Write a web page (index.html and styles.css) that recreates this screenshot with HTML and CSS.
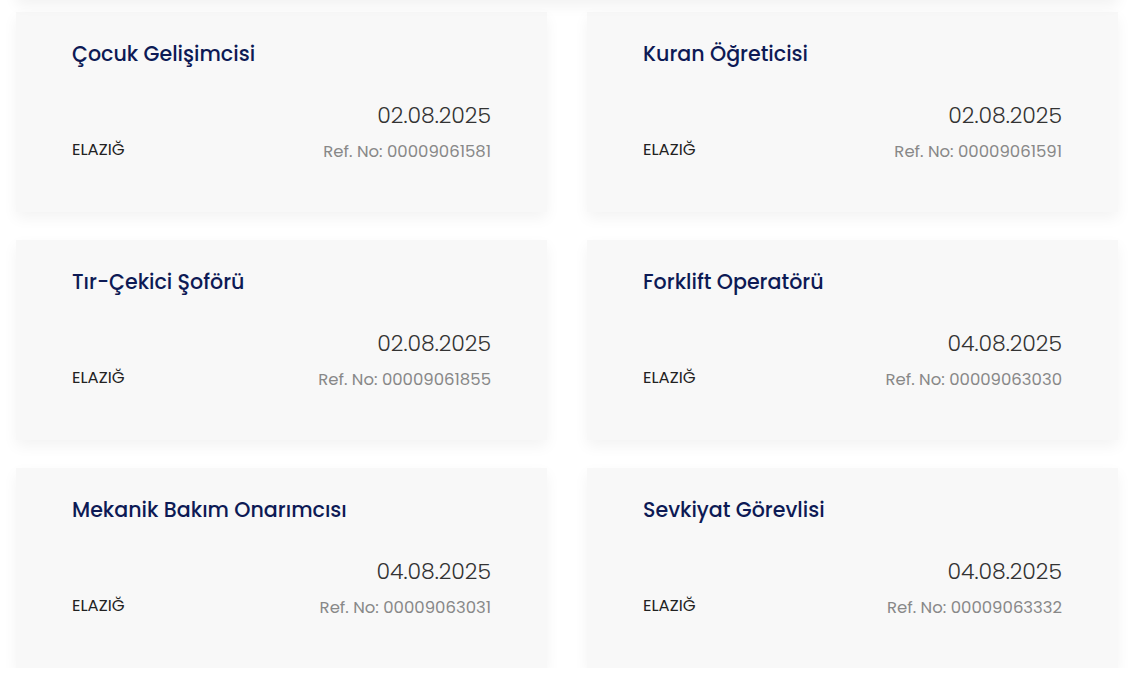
FILE: index.html
```html
<!DOCTYPE html>
<html lang="tr">
<head>
  <meta charset="UTF-8">
  <meta name="viewport" content="width=device-width, initial-scale=1.0">
  <link rel="stylesheet" href="styles.css">
</head>
<body>

  <div class="job-grid">

    <div class="job-card">
      <h3 class="job-title">Çocuk Gelişimcisi</h3>
      <div class="job-meta">
        <span class="job-city">ELAZIĞ</span>
        <div class="job-info">
          <span class="job-date">02.08.2025</span>
          <span class="job-ref">Ref. No: 00009061581</span>
        </div>
      </div>
    </div>

    <div class="job-card">
      <h3 class="job-title">Kuran Öğreticisi</h3>
      <div class="job-meta">
        <span class="job-city">ELAZIĞ</span>
        <div class="job-info">
          <span class="job-date">02.08.2025</span>
          <span class="job-ref">Ref. No: 00009061591</span>
        </div>
      </div>
    </div>

    <div class="job-card">
      <h3 class="job-title">Tır-Çekici Şoförü</h3>
      <div class="job-meta">
        <span class="job-city">ELAZIĞ</span>
        <div class="job-info">
          <span class="job-date">02.08.2025</span>
          <span class="job-ref">Ref. No: 00009061855</span>
        </div>
      </div>
    </div>

    <div class="job-card">
      <h3 class="job-title">Forklift Operatörü</h3>
      <div class="job-meta">
        <span class="job-city">ELAZIĞ</span>
        <div class="job-info">
          <span class="job-date">04.08.2025</span>
          <span class="job-ref">Ref. No: 00009063030</span>
        </div>
      </div>
    </div>

    <div class="job-card">
      <h3 class="job-title">Mekanik Bakım Onarımcısı</h3>
      <div class="job-meta">
        <span class="job-city">ELAZIĞ</span>
        <div class="job-info">
          <span class="job-date">04.08.2025</span>
          <span class="job-ref">Ref. No: 00009063031</span>
        </div>
      </div>
    </div>

    <div class="job-card">
      <h3 class="job-title">Sevkiyat Görevlisi</h3>
      <div class="job-meta">
        <span class="job-city">ELAZIĞ</span>
        <div class="job-info">
          <span class="job-date">04.08.2025</span>
          <span class="job-ref">Ref. No: 00009063332</span>
        </div>
      </div>
    </div>

  </div>

</body>
</html>
```

FILE: styles.css
```css
body {
  margin: 0;
  font-family: 'Poppins', 'Open Sans', sans-serif;
  background-color: #fff;
  overflow: hidden;
}

.job-grid {
  display: grid;
  grid-template-columns: 531px 531px;
  column-gap: 40px;
  row-gap: 28px;
  padding: 12px 0 0 16px;
  position: relative;
}

/* faint shadow of the row above, cut off at the top */
.job-grid::before {
  content: '';
  position: absolute;
  top: -20px;
  left: 16px;
  width: 1102px;
  height: 20px;
  box-shadow: 0 6px 14px rgba(0, 0, 0, 0.05);
}

.job-card {
  height: 200px;
  box-sizing: border-box;
  padding: 30px 56px 0 56px;
  background-color: #f8f8f8;
  box-shadow: 0 6px 14px rgba(0, 0, 0, 0.05);
  display: flex;
  flex-direction: column;
}

.job-title {
  margin: 0;
  font-size: 20.6px;
  font-weight: 500;
  line-height: 24px;
  color: #0d1a55;
}

.job-meta {
  display: flex;
  justify-content: space-between;
  align-items: flex-end;
  margin-top: 35px;
}

.job-city {
  font-size: 16.5px;
  line-height: 22px;
  color: #222;
  margin-bottom: 2px;
}

.job-info {
  display: flex;
  flex-direction: column;
  align-items: flex-end;
}

.job-date {
  font-size: 22px;
  font-weight: 300;
  line-height: 30px;
  color: #333;
}

.job-ref {
  font-size: 16.5px;
  line-height: 22px;
  margin-top: 10px;
  color: #888;
}
```
